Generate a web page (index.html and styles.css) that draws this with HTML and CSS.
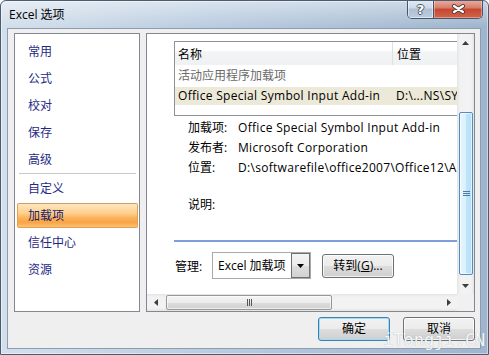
FILE: index.html
```html
<!DOCTYPE html>
<html>
<head>
<meta charset="utf-8">
<title>Excel 选项</title>
<link rel="stylesheet" href="styles.css">
</head>
<body>
<div class="window">
  <div class="titlebar">
    <span class="title">Excel 选项</span>
    <div class="caption-btns">
      <div class="cbtn help"><span class="qmark">?</span></div>
      <div class="cbtn close">
        <svg width="13" height="10" viewBox="0 0 13 10"><path d="M2,2 L11,8 M11,2 L2,8" stroke="#4b3a36" stroke-width="4" stroke-linecap="round" fill="none"/><path d="M2,2 L11,8 M11,2 L2,8" stroke="#ffffff" stroke-width="2.2" stroke-linecap="round" fill="none"/></svg>
      </div>
    </div>
  </div>
  <div class="client">
    <div class="main">
      <div class="nav">
        <div class="nav-item">常用</div>
        <div class="nav-item">公式</div>
        <div class="nav-item">校对</div>
        <div class="nav-item">保存</div>
        <div class="nav-item">高级</div>
        <div class="nav-sep"></div>
        <div class="nav-item">自定义</div>
        <div class="nav-item active">加载项</div>
        <div class="nav-item">信任中心</div>
        <div class="nav-item">资源</div>
      </div>
      <div class="rpanel">
        <div class="rcontent">
          <div class="list">
            <div class="list-head">
              <div class="col col-name">名称</div>
              <div class="col col-loc">位置</div>
            </div>
            <div class="list-group">活动应用程序加载项</div>
            <div class="list-row selected">
              <div class="col col-name latin">Office Special Symbol Input Add-in</div>
              <div class="col col-loc latin">D:\...NS\SY</div>
            </div>
          </div>
          <div class="details">
            <div class="drow"><span class="dlabel">加载项:</span><span class="dval latin">Office Special Symbol Input Add-in</span></div>
            <div class="drow"><span class="dlabel">发布者:</span><span class="dval latin">Microsoft Corporation</span></div>
            <div class="drow"><span class="dlabel">位置:</span><span class="dval latin">D:\softwarefile\office2007\Office12\ADDINS\SYMINPUT.DLL</span></div>
            <div class="drow desc"><span class="dlabel">说明:</span></div>
          </div>
          <div class="divider"></div>
          <div class="manage">
            <span class="manage-label">管理:</span>
            <div class="combo">
              <span class="combo-text">Excel 加载项</span>
              <div class="combo-btn"><svg width="7" height="4" viewBox="0 0 7 4"><polygon points="0,0 7,0 3.5,4" fill="#000"/></svg></div>
            </div>
            <div class="btn goto">转到(<u>G</u>)...</div>
          </div>
        </div>
        <div class="vscroll">
          <div class="sb-btn v"><svg width="7" height="4" viewBox="0 0 7 4"><polygon points="3.5,0 7,4 0,4" fill="#3c3c3c"/></svg></div>
          <div class="vthumb"><svg width="7" height="7" viewBox="0 0 7 7"><path d="M0,1.5 H7 M0,3.5 H7 M0,5.5 H7" stroke="#4a7ba6" stroke-width="1"/></svg></div>
          <div class="sb-space"></div>
          <div class="sb-btn v"><svg width="7" height="4" viewBox="0 0 7 4"><polygon points="0,0 7,0 3.5,4" fill="#3c3c3c"/></svg></div>
        </div>
        <div class="hscroll">
          <div class="sb-btn h"><svg width="4" height="7" viewBox="0 0 4 7"><polygon points="0,3.5 4,0 4,7" fill="#3c3c3c"/></svg></div>
          <div class="hthumb"><svg width="7" height="7" viewBox="0 0 7 7"><path d="M1.5,0 V7 M3.5,0 V7 M5.5,0 V7" stroke="#555" stroke-width="1"/></svg></div>
          <div class="sb-space"></div>
          <div class="sb-btn h"><svg width="4" height="7" viewBox="0 0 4 7"><polygon points="0,0 4,3.5 0,7" fill="#3c3c3c"/></svg></div>
        </div>
        <div class="corner"></div>
      </div>
    </div>
    <div class="buttons">
      <div class="btn dlg default">确定</div>
      <div class="btn dlg">取消</div>
    </div>
  </div>
  <div class="watermark">iTongji.CN</div>
</div>
</body>
</html>
```

FILE: styles.css
```css
* { box-sizing: border-box; }
html, body { margin: 0; padding: 0; }
body {
  width: 489px;
  height: 355px;
  overflow: hidden;
  background: #ffffff;
  font-family: "Open Sans", "Noto Sans CJK SC", sans-serif;
  font-size: 12px;
  color: #000;
}

.latin { letter-spacing: 0.3px; }

.window {
  position: relative;
  width: 489px;
  height: 355px;
  border: 1px solid #4a5c70;
  border-radius: 6px 6px 0 0;
  background:
    linear-gradient(to bottom, rgba(255,255,255,0.45), rgba(255,255,255,0) 26px),
    linear-gradient(to right, #d3dfeb, #b8cbdf 45%, #9fb5cd);
  box-shadow: inset 0 0 0 1px rgba(255,255,255,0.45);
  display: flex;
  flex-direction: column;
  overflow: hidden;
}

/* Title bar */
.titlebar {
  height: 27px;
  flex: none;
  display: flex;
  align-items: flex-start;
  padding-left: 8px;
}
.title {
  line-height: 27px;
  white-space: nowrap;
}
.caption-btns {
  margin-left: auto;
  margin-right: 5px;
  margin-top: -1px;
  height: 19px;
  display: flex;
  border: 1px solid #46576b;
  border-top: none;
  border-radius: 0 0 5px 5px;
  overflow: hidden;
}
.cbtn {
  display: flex;
  align-items: center;
  justify-content: center;
}
.cbtn.help {
  width: 26px;
  border-right: 1px solid #46576b;
  background: linear-gradient(#e4ecf4, #cbd8e6 45%, #aec0d3 50%, #bccde0);
  box-shadow: inset 0 0 0 1px rgba(255,255,255,0.5);
}
.qmark {
  color: #fff;
  font-family: "DejaVu Sans", sans-serif;
  font-weight: bold;
  font-size: 13px;
  line-height: 17px;
  text-shadow: 1px 0 0 #4a5666, -1px 0 0 #4a5666, 0 1px 0 #4a5666, 0 -1px 0 #4a5666;
}
.cbtn.close {
  width: 48px;
  background: linear-gradient(#eab0a3, #d87a68 45%, #c5472f 50%, #d0644b);
  box-shadow: inset 0 0 0 1px rgba(255,255,255,0.35);
}

/* Client */
.client {
  flex: 1;
  margin: 0 7px 5px 6px;
  border: 1px solid #8c9db1;
  background: #efefef;
  padding: 4px 5px 7px 6px;
  display: flex;
  flex-direction: column;
}
.main {
  display: flex;
  gap: 6px;
  height: 279px;
  flex: none;
}

/* Left nav */
.nav {
  width: 126px;
  flex: none;
  border: 1px solid #828790;
  background: #fff;
  display: flex;
  flex-direction: column;
  padding-top: 4px;
}
.nav-item {
  height: 25px;
  flex: none;
  margin: 1px 1px 1px 2px;
  padding-left: 10px;
  line-height: 23px;
  border: 1px solid transparent;
  color: #1f2a86;
  white-space: nowrap;
}
.nav-item.active {
  border-color: #e3a04c;
  border-top-color: #c9a06a;
  border-radius: 2px;
  background: linear-gradient(#fee6bd, #fdd08f 40%, #fbb35c 60%, #faa445 80%, #fcc277);
  color: #1a1a6a;
}
.nav-sep {
  height: 2px;
  flex: none;
  margin: 0 3px 0 4px;
  border-top: 1px solid #c8c8c8;
  background: #fff;
}

/* Right panel */
.rpanel {
  width: 329px;
  flex: none;
  border: 1px solid #828790;
  background: #fff;
  display: grid;
  grid-template-columns: 310px 17px;
  grid-template-rows: 260px 17px;
}
.rcontent {
  overflow: hidden;
  padding: 7px 0 0 27px;
  white-space: nowrap;
}
.list {
  width: 300px;
  height: 75px;
  border: 1px solid #8e9196;
}
.list-head {
  height: 23px;
  display: flex;
  background: linear-gradient(#ffffff 0%, #ffffff 38%, #f3f4f6 42%, #eff1f3 100%);
  line-height: 26px;
}
.col { white-space: nowrap; overflow: hidden; }
.col-name {
  width: 218px;
  flex: none;
  padding-left: 3px;
}
.list-head .col-name { border-right: 1px solid #dfe1e4; }
.list-head .col-loc { padding-left: 4px; }
.col-loc { flex: 1; padding-left: 3px; }
.list-group {
  height: 22px;
  line-height: 22px;
  padding-left: 3px;
  color: #6a6a6a;
}
.list-row {
  height: 18px;
  line-height: 18px;
  display: flex;
}
.list-row.selected { background: #ece9d8; }

.details {
  margin-top: 2px;
  margin-left: 14px;
}
.drow {
  height: 20px;
  line-height: 20px;
  display: flex;
  white-space: nowrap;
}
.dlabel { width: 50px; flex: none; }
.drow.desc { margin-top: 17px; }

.divider {
  margin-top: 25px;
  width: 300px;
  height: 2px;
  background: #7f9fdc;
}

.manage {
  margin-top: 10px;
  height: 27px;
  display: flex;
  align-items: center;
}
.manage-label {
  width: 38px;
  flex: none;
  padding-left: 1px;
}
.combo {
  width: 99px;
  height: 27px;
  flex: none;
  border: 1px solid #a9a9a9;
  background: #fff;
  display: flex;
}
.combo-text {
  flex: 1;
  padding-left: 5px;
  line-height: 25px;
  white-space: nowrap;
  overflow: hidden;
}
.combo-btn {
  width: 19px;
  flex: none;
  border: 1px solid #6f6f6f;
  background: linear-gradient(#f4f4f4, #ececec 50%, #dedede 51%, #d2d2d2);
  display: flex;
  align-items: center;
  justify-content: center;
}

.btn {
  border: 1px solid #707070;
  border-radius: 3px;
  background: linear-gradient(#f2f2f2 0%, #ebebeb 50%, #dddddd 51%, #cfcfcf 100%);
  box-shadow: inset 0 0 0 1px rgba(255,255,255,0.75);
  text-align: center;
  line-height: 22px;
  white-space: nowrap;
}
.goto {
  margin-left: 11px;
  width: 72px;
  height: 24px;
  flex: none;
}

/* Scrollbars */
.vscroll {
  display: flex;
  flex-direction: column;
  background: linear-gradient(to right, #e4e4e4, #f2f2f2 3px, #f2f2f2 14px, #e4e4e4);
}
.hscroll {
  display: flex;
  background: linear-gradient(#e4e4e4, #f2f2f2 3px, #f2f2f2 14px, #e4e4e4);
}
.sb-btn {
  display: flex;
  align-items: center;
  justify-content: center;
  flex: none;
}
.sb-btn.v { height: 17px; }
.sb-btn.h { width: 17px; }
.sb-space { flex: 1; }
.vthumb {
  margin: 61px 1px 0 2px;
  height: 163px;
  flex: none;
  border: 1px solid #4f8dc2;
  border-radius: 2px;
  background: linear-gradient(to right, #e8f6fd, #d9f0fc 50%, #bfe5f9 51%, #b5def5);
  box-shadow: inset 0 0 0 1px rgba(255,255,255,0.6);
  display: flex;
  align-items: center;
  justify-content: center;
}
.hthumb {
  margin: 1px 0 1px 2px;
  width: 166px;
  flex: none;
  border: 1px solid #979797;
  border-radius: 2px;
  background: linear-gradient(#f5f5f5, #ececec 50%, #dcdcdc 51%, #d2d2d2);
  box-shadow: inset 0 0 0 1px rgba(255,255,255,0.6);
  display: flex;
  align-items: center;
  justify-content: center;
}
.corner { background: #f0f0f0; }

/* Bottom buttons */
.buttons {
  margin-top: 5px;
  display: flex;
  justify-content: flex-end;
  gap: 13px;
}
.dlg {
  width: 72px;
  height: 24px;
}
.dlg.default {
  border-color: #3c7fb1;
  box-shadow: inset 0 0 0 1px #9fdcf6;
}

.watermark {
  position: absolute;
  left: 382px;
  top: 329px;
  font-family: "DejaVu Sans Mono", monospace;
  font-size: 17px;
  line-height: 20px;
  color: rgba(255,255,255,0.92);
  text-shadow: 0 0 1px rgba(110,130,150,0.7);
  white-space: nowrap;
}
```
